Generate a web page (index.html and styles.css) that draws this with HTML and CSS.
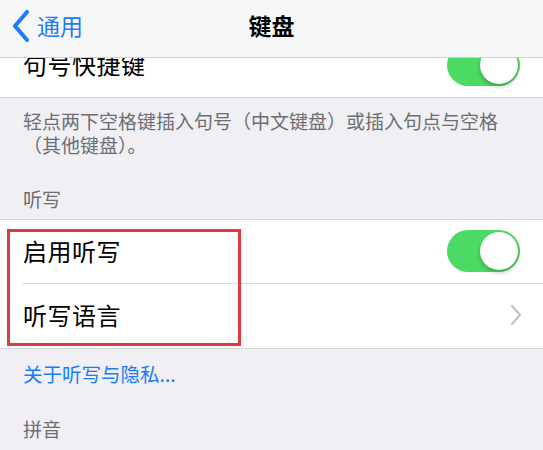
FILE: index.html
```html
<!DOCTYPE html>
<html lang="zh-CN">
<head>
<meta charset="utf-8">
<title>键盘</title>
<link rel="stylesheet" href="styles.css">
</head>
<body>
<div class="screen">
  <header class="nav">
    <div class="nav-left">
      <svg class="back-chevron" width="20" height="32" viewBox="0 0 20 32"><path d="M15 2 L3 16 L15 30" fill="none" stroke="#1a7cf6" stroke-width="4" stroke-linecap="round" stroke-linejoin="round"/></svg>
      <span class="back-label">通用</span>
    </div>
    <div class="nav-title">键盘</div>
    <div class="nav-right"></div>
  </header>

  <main class="content">
    <section class="group group-first">
      <div class="row">
        <span class="row-label">句号快捷键</span>
        <span class="toggle"><span class="knob"></span></span>
      </div>
    </section>

    <div class="footer-block">
      <p class="footnote">轻点两下空格键插入句号（中文键盘）或插入句点与空格<br>（其他键盘）。</p>
      <p class="section-header">听写</p>
    </div>

    <section class="group">
      <div class="row row-sep">
        <span class="row-label">启用听写</span>
        <span class="toggle"><span class="knob"></span></span>
      </div>
      <div class="row">
        <span class="row-label">听写语言</span>
        <svg class="chevron" width="12" height="22" viewBox="0 0 12 22"><path d="M2 2 L10 11 L2 20" fill="none" stroke="#c4c4c8" stroke-width="2.2" stroke-linecap="round" stroke-linejoin="round"/></svg>
      </div>
      <div class="highlight"></div>
    </section>

    <div class="footer-block footer-bottom">
      <p class="link">关于听写与隐私...</p>
      <p class="section-header header-pinyin">拼音</p>
    </div>
  </main>
</div>
</body>
</html>
```

FILE: styles.css
```css
* { box-sizing: border-box; }
html, body { margin: 0; padding: 0; }
body {
  width: 543px;
  height: 450px;
  overflow: hidden;
  background: #efeff4;
  font-family: "Noto Sans CJK SC", "Noto Sans", sans-serif;
  color: #000;
}
p { margin: 0; }
.screen {
  width: 543px;
  height: 450px;
  overflow: hidden;
  background: #efeff4;
}
.nav {
  position: relative;
  z-index: 2;
  height: 58px;
  background: #f7f7f7;
  border-bottom: 1px solid #cfcfd2;
  display: grid;
  grid-template-columns: 1fr auto 1fr;
  align-items: center;
}
.nav-left {
  display: flex;
  align-items: center;
  padding-left: 12px;
  gap: 5px;
  height: 100%;
}
.back-chevron { display: block; margin-top: -6px; }
.back-label {
  color: #1a7cf6;
  font-size: 23px;
  line-height: 1;
  margin-top: -6px;
}
.nav-title {
  font-size: 23px;
  font-weight: 700;
  line-height: 1;
  margin-top: -6px;
}
.content {
  margin-top: -24px;
}
.group {
  position: relative;
  background: #fff;
  border-top: 1px solid #d6d6da;
  border-bottom: 1px solid #d6d6da;
}
.group-first { border-top: none; }
.row {
  height: 64px;
  display: flex;
  align-items: center;
  justify-content: space-between;
  padding: 0 23px 0 23px;
  position: relative;
}
.group-first .row { height: 63px; }
.row-sep::after {
  content: "";
  position: absolute;
  left: 22px;
  right: 0;
  bottom: 0;
  height: 1px;
  background: #dcdce0;
}
.row-sep { height: 64px; }
.row-label {
  font-size: 24px;
  line-height: 1;
  letter-spacing: 0.5px;
  margin-top: -3px;
}
.toggle {
  width: 73px;
  height: 42px;
  border-radius: 21px;
  background: #4cd964;
  position: relative;
  flex: none;
  margin-top: -2px;
}
.knob {
  position: absolute;
  right: 2px;
  top: 2px;
  width: 38px;
  height: 38px;
  border-radius: 50%;
  background: #fff;
  box-shadow: 0 3px 4px rgba(0,0,0,0.22), 0 0 1px rgba(0,0,0,0.1);
}
.chevron { display: block; margin-right: -2px; margin-top: -2px; }
.footer-block {
  padding: 11px 23px 8px 23px;
}
.footnote {
  font-size: 19px;
  line-height: 24px;
  color: #6d6d72;
}
.section-header {
  margin-top: 30px;
  font-size: 19px;
  line-height: 24px;
  color: #6d6d72;
}
.footer-bottom { padding-top: 13px; }
.link {
  font-size: 19.5px;
  line-height: 24px;
  color: #1a7cf6;
}
.header-pinyin { margin-top: 31px; }
.highlight {
  position: absolute;
  left: 7px;
  top: 9px;
  width: 234px;
  height: 117px;
  border: 3px solid #e2393c;
  pointer-events: none;
}
```
